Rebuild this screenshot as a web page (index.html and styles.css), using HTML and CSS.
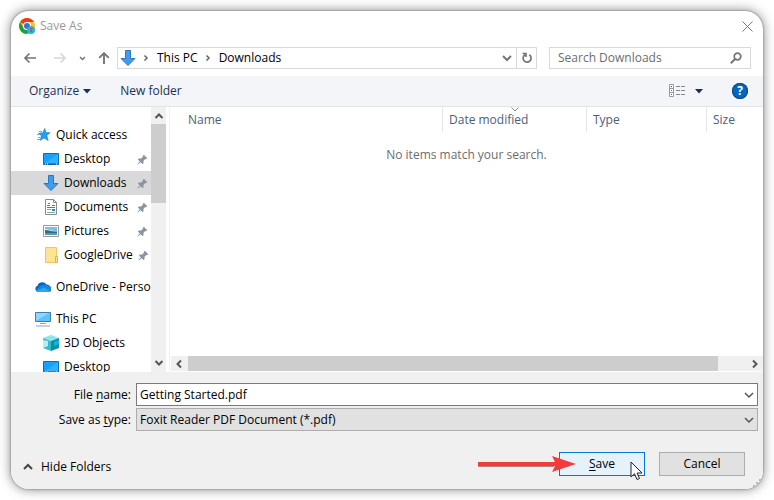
FILE: index.html
```html
<!DOCTYPE html>
<html lang="en">
<head>
    <meta charset="UTF-8">
    <meta name="viewport" content="width=device-width, initial-scale=1.0">
    <title>Save As</title>
    <link rel="stylesheet" href="styles.css">
</head>
<body>
    <!-- shared icons -->
    <svg class="sprite" width="0" height="0" aria-hidden="true">
        <symbol id="download" viewBox="0 0 16 16">
            <path d="M5.500.5h5v8h4.500L8 15.500 1 8.500h4.500z" fill="#3f9cec" stroke="#2878c4"/>
        </symbol>
        <symbol id="desktop" viewBox="0 0 16 16">
            <path d="M.5 2.500h15v11H.5z" fill="#18a0fb" stroke="#0b6fb8"/>
            <path d="M1 13L15 3v10z" fill="#35b0ff"/>
            <path d="M1 13h14" stroke="#0a5c9c"/>
            <path d="M2 13h1M4 13h1M13 13h1" stroke="#fff"/>
        </symbol>
        <symbol id="pin" viewBox="0 0 12 12">
            <path d="M7.500.8l3.700 3.700-1.200 1.200-1-.2-2 2 .2 2.500-1.200 1L3.900 8.900 1 11.500l-.5-.5 2.600-2.900L1 6l1-1.200 2.500.2 2-2-.2-1z" fill="#8796a1"/>
        </symbol>
        <symbol id="down" viewBox="0 0 10 10">
            <path d="M1 3l4 4 4-4" fill="none" stroke="currentColor" stroke-width="1.500"/>
        </symbol>
        <symbol id="caret" viewBox="0 0 8 5">
            <path d="M0 0h8L4 4.500z" fill="#1b2f57"/>
        </symbol>
    </svg>

    <main class="dialog">
        <header class="titlebar">
            <svg class="icon" viewBox="0 0 16 16">
                <circle cx="8" cy="8" r="8" fill="#fbc116"/>
                <path d="M8 8L1.100 4A8 8 0 0 1 15 4H8z" fill="#e33b2e"/>
                <path d="M1.100 4A8 8 0 0 0 8 16l3.500-6H4.500z" fill="#229b4a"/>
                <circle cx="8" cy="8" r="4" fill="#fff"/>
                <circle cx="8" cy="8" r="3" fill="#3272d9"/>
                <circle cx="12" cy="12" r="4" fill="#25b7d3"/>
                <path d="M11 10.500h2.500M11 12h2M11.500 13.500h2" stroke="#d3414b"/>
            </svg>
            <h1>Save As</h1>
            <button class="close" aria-label="Close">
                <svg width="11" height="11" viewBox="0 0 11 11"><path d="M.5.5l10 10M10.500.5l-10 10" stroke="#777"/></svg>
            </button>
        </header>

        <div class="navbar">
            <div class="history">
                <button aria-label="Back">
                    <svg width="14" height="12" viewBox="0 0 14 12"><path d="M13 6H2M6.500 1.500L2 6l4.500 4.500" fill="none" stroke="#757575" stroke-width="1.700"/></svg>
                </button>
                <button class="forward" aria-label="Forward" disabled>
                    <svg width="14" height="12" viewBox="0 0 14 12"><path d="M1 6h11M7.500 1.500L12 6l-4.500 4.500" fill="none" stroke="#d8d8d8" stroke-width="1.700"/></svg>
                </button>
                <button class="recent" aria-label="Recent locations">
                    <svg width="7" height="7" viewBox="0 0 7 7"><path d="M1 2l2.500 2.500L6 2" fill="none" stroke="#777" stroke-width="1.500"/></svg>
                </button>
                <button aria-label="Up">
                    <svg width="12" height="14" viewBox="0 0 12 14"><path d="M6 13V2M1.200 6.800L6 2l4.800 4.800" fill="none" stroke="#757575" stroke-width="1.900"/></svg>
                </button>
            </div>
            <div class="address">
                <svg class="icon"><use href="#download"/></svg>
                <svg class="sep" width="6" height="8" viewBox="0 0 6 8"><path d="M1.500 1.500L4 4 1.500 6.500" fill="none" stroke="#666" stroke-width="1.500"/></svg>
                <a href="#">This PC</a>
                <svg class="sep" width="6" height="8" viewBox="0 0 6 8"><path d="M1.500 1.500L4 4 1.500 6.500" fill="none" stroke="#666" stroke-width="1.500"/></svg>
                <a href="#">Downloads</a>
                <button class="previous" aria-label="Previous locations"><svg width="10" height="10" viewBox="0 0 10 10"><path d="M1 3l4 4 4-4" fill="none" stroke="#777" stroke-width="2"/></svg></button>
                <button class="refresh" aria-label="Refresh">
                    <svg width="12" height="12" viewBox="0 0 12 12"><path d="M8.300 2.800A4 4 0 1 1 4 2.700M1.500 1.500h3.500v3.500" fill="none" stroke="#757575" stroke-width="1.700"/></svg>
                </button>
            </div>
            <div class="search">
                <input type="text" aria-label="Search Downloads" placeholder="Search Downloads">
                <svg width="12" height="12" viewBox="0 0 12 12"><circle cx="7.500" cy="4.500" r="3.300" fill="none" stroke="#757575" stroke-width="1.700"/><path d="M5 7L.8 11.200" stroke="#757575" stroke-width="2"/></svg>
            </div>
        </div>

        <div class="toolbar">
            <button>Organize <svg width="8" height="5"><use href="#caret"/></svg></button>
            <button>New folder</button>
            <button class="view" aria-label="Change your view">
                <svg width="17" height="14" viewBox="0 0 17 14">
                    <path d="M.5.5h4v12h-4zM.5 4.500h4M.5 8.500h4" fill="#fff" stroke="#999"/>
                    <path d="M7 2.500h4M12 2.500h4M7 6.500h4M12 6.500h4M7 10.500h4M12 10.500h4" stroke="#888"/>
                    <path d="M2 2.500h1" stroke="#444"/><path d="M2 6.500h1" stroke="#28c"/><path d="M2 10.500h1" stroke="#d22"/>
                </svg>
                <svg width="8" height="5"><use href="#caret"/></svg>
            </button>
            <button class="help" aria-label="Help">?</button>
        </div>

        <div class="content">
            <nav class="sidebar">
                <div class="tree">
                    <a class="root" href="#">
                        <svg class="icon" viewBox="0 0 16 16"><path d="M9.800 1.500l1.200 4 4.200.2-3.400 2.700 1.400 5.100-4.200-2.500L5 13.500l1.400-4.700L3.500 6.300l4.300-.6z" fill="#259ee8" stroke="#1482cc" stroke-width=".6"/><path d="M4 4.500h3M2 7.500h3M3 10.500h2M2 12.500h3" stroke="#58b8ef"/></svg>
                        <span>Quick access</span>
                    </a>
                    <a href="#"><svg class="icon"><use href="#desktop"/></svg><span>Desktop</span><svg class="pin"><use href="#pin"/></svg></a>
                    <a class="selected" href="#"><svg class="icon"><use href="#download"/></svg><span>Downloads</span><svg class="pin"><use href="#pin"/></svg></a>
                    <a href="#">
                        <svg class="icon" viewBox="0 0 16 16"><path d="M2.500.5h8l3 3v12h-11z" fill="#fff" stroke="#8b8b8b"/><path d="M10.500.5v3h3" fill="none" stroke="#8b8b8b"/><path d="M4 6.500h3M5 4.500h2M9 6.500h3M4 8.500h8M9 10.500h3M9 11.500h3" stroke="#238bd0"/><path d="M4 10.500h4M4 13.500h8" stroke="#8aa"/></svg>
                        <span>Documents</span><svg class="pin"><use href="#pin"/></svg>
                    </a>
                    <a href="#">
                        <svg class="icon" viewBox="0 0 16 16"><path d="M.5 2.500h15v11H.5z" fill="#fff" stroke="#999"/><path d="M2 4h12v8H2z" fill="#7bbdf2"/><path d="M2 6c4 0 5 2 12 2v2H2z" fill="#d5edf9"/><path d="M2 7c4 0 6 2 12 1.500V10H2z" fill="#356a70"/><path d="M2 10h12v2H2z" fill="#4f9bb7"/></svg>
                        <span>Pictures</span><svg class="pin"><use href="#pin"/></svg>
                    </a>
                    <a href="#">
                        <svg class="icon" viewBox="0 0 16 16"><path d="M2.500.5h11v15h-11z" fill="#ffe394" stroke="#efc75e"/><path d="M12.500 9.500h2v6h-2z" fill="#ffe394" stroke="#e5b53f"/></svg>
                        <span>GoogleDrive</span><svg class="pin"><use href="#pin"/></svg>
                    </a>
                    <a class="root group" href="#">
                        <svg class="icon" viewBox="0 0 16 16"><path d="M3 13a3.200 3.200 0 0 1-.5-6.200A5 5 0 0 1 11.500 5.500a4 4 0 0 1 2 7.500z" fill="#0a64b8"/><path d="M5 7l4-1.500 4.500 1.500A3 3 0 0 1 13.500 13H3A3 3 0 0 1 1 11z" fill="#1687dc"/><path d="M1.500 12L9 8.500l6 3.500a3 3 0 0 1-2 1H3a3 3 0 0 1-1.500-1z" fill="#2ba8f0"/></svg>
                        <span>OneDrive - Person</span>
                    </a>
                    <a class="root group" href="#">
                        <svg class="icon" viewBox="0 0 16 16"><path d="M.5 1.500h15v9H.5z" fill="#5fc0fa" stroke="#3f7ea8"/><path d="M1 10L14 2H1z" fill="#8fd6ff"/><path d="M5 12.500h6M1 15h14" stroke="#8fa3b3"/></svg>
                        <span>This PC</span>
                    </a>
                    <a href="#">
                        <svg class="icon" viewBox="0 0 16 16"><path d="M8 0l8 3-8 3-8-3z" fill="#8fe3ec"/><path d="M0 3l8 3v10l-8-3z" fill="#35bccb"/><path d="M16 3L8 6v10l8-3z" fill="#0e8ea4"/><path d="M0 5l5 1v5l-5 2z" fill="#b8edf2"/><path d="M11 7l5-2v4l-5 2z" fill="#08b8df"/></svg>
                        <span>3D Objects</span>
                    </a>
                    <a href="#"><svg class="icon"><use href="#desktop"/></svg><span>Desktop</span></a>
                </div>
                <div class="scroll-y">
                    <svg width="10" height="10" viewBox="0 0 10 10"><path d="M1.500 7L5 3.500 8.500 7" fill="none" stroke="#555" stroke-width="2"/></svg>
                    <div class="track"><div class="thumb"></div></div>
                    <svg width="10" height="10" viewBox="0 0 10 10"><path d="M1.500 3L5 6.500 8.500 3" fill="none" stroke="#555" stroke-width="2"/></svg>
                </div>
            </nav>
            <section class="files">
                <table>
                    <thead>
                        <tr>
                            <th>Name</th>
                            <th class="date">Date modified<svg class="sort" width="8" height="5" viewBox="0 0 8 5"><path d="M.5.5L4 4 7.500.5" fill="none" stroke="#888"/></svg></th>
                            <th class="type">Type</th>
                            <th class="size">Size</th>
                        </tr>
                    </thead>
                    <tbody>
                        <tr><td colspan="4">No items match your search.</td></tr>
                    </tbody>
                </table>
                <div class="scroll-x">
                    <svg width="10" height="10" viewBox="0 0 10 10"><path d="M7 1.500L3.500 5 7 8.500" fill="none" stroke="#555" stroke-width="2"/></svg>
                    <div class="track"><div class="thumb"></div></div>
                    <svg width="10" height="10" viewBox="0 0 10 10"><path d="M3 1.500L6.500 5 3 8.500" fill="none" stroke="#555" stroke-width="2"/></svg>
                </div>
            </section>
        </div>

        <form class="footer">
            <div class="field">
                <label for="filename">File <u>n</u>ame:</label>
                <div class="box">
                    <input id="filename" type="text" value="Getting Started.pdf">
                    <svg class="arrow"><use href="#down"/></svg>
                </div>
            </div>
            <div class="field">
                <label for="filetype">Save as <u>t</u>ype:</label>
                <div class="box">
                    <select id="filetype">
                        <option>Foxit Reader PDF Document (*.pdf)</option>
                    </select>
                    <svg class="arrow"><use href="#down"/></svg>
                </div>
            </div>
            <div class="actions">
                <button type="button" class="hide">
                    <svg width="10" height="10" viewBox="0 0 10 10"><path d="M1 7l4-4 4 4" fill="none" stroke="#444" stroke-width="2"/></svg>
                    Hide Folders
                </button>
                <div class="save-wrap">
                    <button type="button" class="btn save"><span><u>S</u>ave</span></button>
                    <svg class="pointer-arrow" width="98" height="18" viewBox="0 0 98 18"><path d="M0 7h77L74 1l24 8-24 8 3-6H0z" fill="#f23b3b"/><path d="M0 11.500h76" stroke="#a66" stroke-width=".8"/></svg>
                    <svg class="cursor" width="13" height="20" viewBox="0 0 13 20"><path d="M1 1v15l3.500-3.300L7 18.500l2.500-1-2.400-5.500H12z" fill="#fff" stroke="#223"/></svg>
                </div>
                <button type="button" class="btn">Cancel</button>
            </div>
            <svg class="grip" width="9" height="9" viewBox="0 0 9 9"><path d="M7 1h2M4 4h2M7 4h2M1 7h2M4 7h2M7 7h2" stroke="#b5b5b5" stroke-width="2"/></svg>
        </form>
    </main>
</body>
</html>
```
FILE: styles.css
```css
* {
    box-sizing: border-box;
}
body {
    font-family: "Open Sans", "Noto Sans", sans-serif;
    font-size: 12px;
    line-height: 16px;
    margin: 0;
    padding: 11px;
    background-color: #fff;
    color: #000;
}
button, input, select {
    font: inherit;
    color: inherit;
    margin: 0;
    padding: 0;
    border: none;
    background: none;
}
a {
    color: inherit;
    text-decoration: none;
}
svg {
    display: block;
    flex-shrink: 0;
}
.sprite {
    position: absolute;
}
.icon {
    width: 16px;
    height: 16px;
}
.dialog {
    display: flex;
    flex-direction: column;
    min-height: calc(100vh - 22px);
    background-color: #fff;
    border-radius: 18px;
    overflow: hidden;
    box-shadow: 0 0 2px rgba(0, 0, 0, 0.5), 0 0 12px rgba(0, 0, 0, 0.5);
}

/* title bar */
.titlebar {
    display: flex;
    align-items: center;
    gap: 5px;
    height: 30px;
    padding: 0 10px 0 8px;
}
.titlebar h1 {
    flex: 1;
    margin: 0;
    font-size: 12px;
    font-weight: normal;
    color: #999;
}

/* navigation */
.navbar {
    display: flex;
    height: 35px;
    padding: 6px 12px 7px;
}
.history {
    display: flex;
    align-items: center;
    gap: 12px;
}
.history .forward {
    margin-left: 4px;
}
.address, .search {
    display: flex;
    align-items: center;
    border: 1px solid #d9d9d9;
}
.address {
    flex: 1;
    margin: 0 12px 0 7px;
    padding-left: 2px;
}
.address .sep {
    margin: 0 8px 0 7px;
}
.address .previous {
    margin-left: auto;
    padding: 0 4px;
}
.address .refresh {
    display: flex;
    align-items: center;
    justify-content: center;
    width: 20px;
    height: 100%;
    border-left: 1px solid #d9d9d9;
}
.search {
    width: 202px;
    padding: 0 8px;
}
.search input {
    flex: 1;
    min-width: 0;
    outline: none;
}
.search input::placeholder {
    color: #6d6d6d;
    opacity: 1;
}

/* toolbar */
.toolbar {
    display: flex;
    align-items: center;
    gap: 29px;
    height: 31px;
    padding: 0 15px 0 18px;
    background-color: #f4f5f8;
    border-bottom: 1px solid #e5e5e5;
    color: #1b2f57;
}
.toolbar button {
    display: flex;
    align-items: center;
    gap: 4px;
}
.toolbar .view {
    gap: 9px;
    margin-left: auto;
}
.toolbar .help {
    justify-content: center;
    width: 16px;
    height: 16px;
    border-radius: 50%;
    background-color: #0067c0;
    box-shadow: inset 0 0 0 1px #0a4a8a;
    color: #fff;
    font-weight: bold;
}

/* folders and files */
.content {
    display: flex;
    flex: 1 1 265px;
}
.sidebar {
    display: flex;
    width: 159px;
    height: 265px;
    border-right: 1px solid #f0f0f0;
}
.tree {
    width: 140px;
    padding-top: 16px;
    overflow: hidden;
}
.tree a {
    display: flex;
    align-items: center;
    gap: 5px;
    height: 24px;
    padding: 0 3px 0 32px;
    white-space: nowrap;
}
.tree a.root {
    padding-left: 24px;
}
.tree a.group {
    margin-top: 8px;
}
.tree a.selected {
    background-color: #d9d9d9;
}
.pin {
    width: 11px;
    height: 11px;
    margin-left: auto;
}
.scroll-y, .scroll-x {
    display: flex;
    align-items: center;
    background-color: #f0f0f0;
}
.scroll-y {
    flex-direction: column;
    width: 15px;
    padding: 4px 0;
}
.scroll-x {
    height: 15px;
    padding: 0 3px;
    margin: 0 0 1px 1px;
}
.track {
    flex: 1;
}
.thumb {
    background-color: #cdcdcd;
}
.scroll-y .track {
    width: 100%;
    padding: 3px 0;
}
.scroll-y .thumb {
    height: 79px;
}
.scroll-x .track {
    padding: 0 4px;
}
.scroll-x .thumb {
    width: 95%;
    height: 15px;
}
.files {
    display: flex;
    flex-direction: column;
    flex: 1;
    justify-content: space-between;
}
.files table {
    width: 100%;
    table-layout: fixed;
    border-collapse: separate;
    border-spacing: 0;
}
.files th {
    position: relative;
    height: 25px;
    padding: 0 0 0 6px;
    border-right: 1px solid #e5e5e5;
    color: #4c607a;
    font-weight: normal;
    text-align: left;
}
.files th:first-child {
    padding-left: 18px;
}
.files th:last-child {
    border-right: none;
}
.date {
    width: 144px;
}
.type {
    width: 120px;
}
.size {
    width: 56px;
}
.sort {
    position: absolute;
    top: 0;
    left: 50%;
    margin-left: -4px;
}
.files td {
    padding: 15px 0;
    color: #6d6d6d;
    text-align: center;
}

/* file name, type and buttons */
.footer {
    position: relative;
    padding: 11px 5px 7px 16px;
    background-color: #f0f0f0;
}
.field {
    display: flex;
    align-items: center;
    gap: 5px;
    margin-bottom: 2px;
}
.field label {
    width: 104px;
    text-align: right;
}
.box {
    position: relative;
    flex: 1;
}
.box input, .box select {
    display: block;
    width: 100%;
    height: 23px;
    padding: 0 20px 0 3px;
    border: 1px solid #7a7a7a;
    border-radius: 0;
    background-color: #fff;
    appearance: none;
}
.box select {
    border-color: #adadad;
    background-color: #e1e1e1;
}
.box .arrow {
    position: absolute;
    top: 7px;
    right: 4px;
    width: 10px;
    height: 10px;
    color: #555;
    pointer-events: none;
}
u {
    text-underline-offset: 2px;
}
.actions {
    display: flex;
    align-items: flex-start;
    gap: 14px;
    margin-top: 21px;
    padding-right: 13px;
}
.hide {
    display: flex;
    align-items: center;
    gap: 8px;
    height: 30px;
    margin-right: auto;
    margin-left: -4px;
}
.save-wrap {
    position: relative;
}
.btn {
    width: 86px;
    height: 24px;
    border: 1px solid #adadad;
    background-color: #e1e1e1;
}
.save {
    border-color: #0078d7;
    background-color: #e5f1fb;
}
.pointer-arrow {
    position: absolute;
    top: 3px;
    right: 69px;
}
.cursor {
    position: absolute;
    top: 9px;
    right: 2px;
}
.grip {
    position: absolute;
    right: 2px;
    bottom: 1px;
}
```
